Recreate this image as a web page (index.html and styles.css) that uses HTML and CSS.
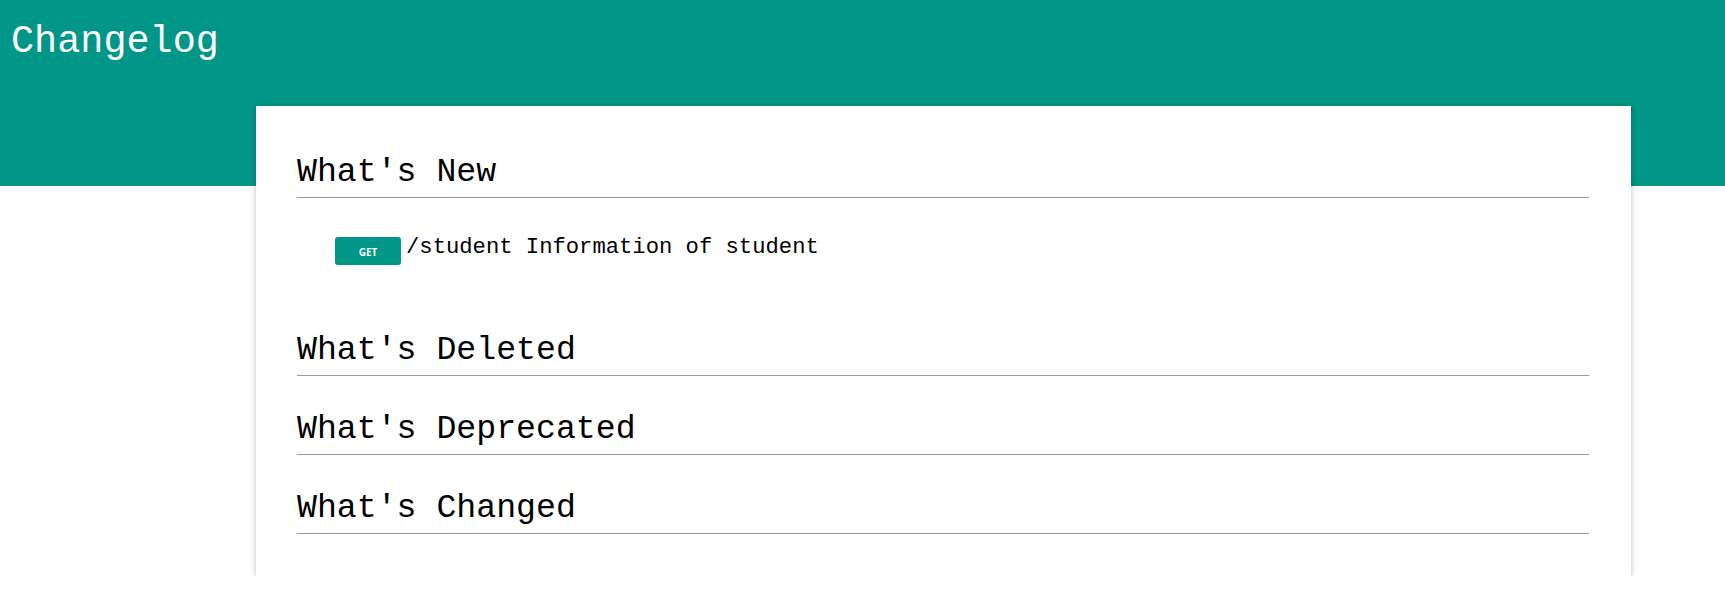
FILE: index.html
```html
<!DOCTYPE html>
<html>
<head>
<meta charset="utf-8">
<title>Changelog</title>
<link rel="stylesheet" href="styles.css">
</head>
<body>
<header class="topbar">
  <h1 class="title">Changelog</h1>
</header>
<main class="card">
  <section class="section section-new">
    <h2 class="section-title">What's New</h2>
    <ul class="endpoints">
      <li class="endpoint">
        <span class="method">GET</span>
        <span class="endpoint-text">/student Information of student</span>
      </li>
    </ul>
  </section>
  <section class="section">
    <h2 class="section-title">What's Deleted</h2>
  </section>
  <section class="section">
    <h2 class="section-title">What's Deprecated</h2>
  </section>
  <section class="section">
    <h2 class="section-title">What's Changed</h2>
  </section>
</main>
</body>
</html>
```
FILE: styles.css
```css
html, body {
  margin: 0;
  padding: 0;
  background: #ffffff;
}

body {
  font-family: "Liberation Mono", "DejaVu Sans Mono", monospace;
  color: #000000;
}

.topbar {
  background: #009688;
  height: 186px;
  padding: 21px 0 0 11px;
  box-sizing: border-box;
}

.title {
  margin: 0;
  color: #ffffff;
  font-size: 38.5px;
  font-weight: normal;
  line-height: 43px;
}

.card {
  display: flex;
  flex-direction: column;
  gap: 33px;
  margin: -80px 0 0 256px;
  width: 1375px;
  box-sizing: border-box;
  background: #ffffff;
  padding: 46px 42px 42px 41px;
  box-shadow: 0 1px 6px rgba(0, 0, 0, 0.26);
  position: relative;
}

.section {
  display: flex;
  flex-direction: column;
}

.section-title {
  margin: 0;
  font-size: 33.2px;
  font-weight: normal;
  line-height: 40px;
  padding-bottom: 5px;
  border-bottom: 1px solid #9a9a9a;
}

.endpoints {
  list-style: none;
  margin: 39px 0 32px 0;
  padding: 0 0 0 38px;
}

.endpoint {
  display: flex;
  align-items: flex-start;
  gap: 5px;
}

.method {
  width: 66px;
  height: 28px;
  background: #009688;
  color: #ffffff;
  border-radius: 3px;
  display: flex;
  align-items: center;
  justify-content: center;
  font-family: "Open Sans", "Noto Sans", sans-serif;
  font-size: 10px;
  font-weight: 700;
  padding-top: 1px;
  box-sizing: border-box;
}

.endpoint-text {
  font-size: 22.2px;
  line-height: 21px;
}
```
